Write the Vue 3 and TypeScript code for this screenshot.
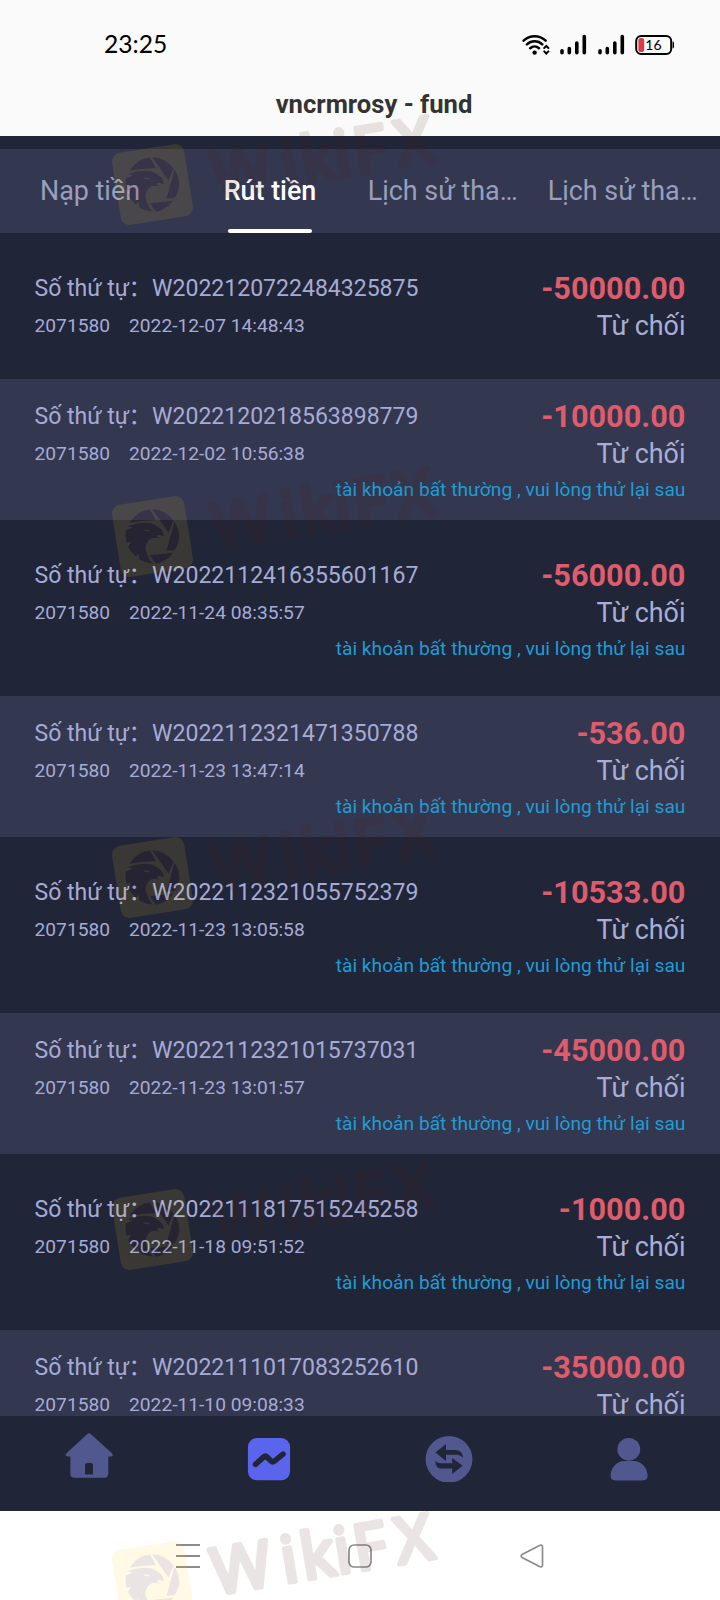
<script setup lang="ts">
interface Entry {
  order: string
  account: string
  time: string
  amount: string
  status: string
  note?: string
}

const note = 'tài khoản bất thường , vui lòng thử lại sau'
const status = 'Từ chối'
const account = '2071580'

const entries: Entry[] = [
  { order: 'W2022120722484325875', account, time: '2022-12-07 14:48:43', amount: '-50000.00', status },
  { order: 'W2022120218563898779', account, time: '2022-12-02 10:56:38', amount: '-10000.00', status, note },
  { order: 'W2022112416355601167', account, time: '2022-11-24 08:35:57', amount: '-56000.00', status, note },
  { order: 'W2022112321471350788', account, time: '2022-11-23 13:47:14', amount: '-536.00', status, note },
  { order: 'W2022112321055752379', account, time: '2022-11-23 13:05:58', amount: '-10533.00', status, note },
  { order: 'W2022112321015737031', account, time: '2022-11-23 13:01:57', amount: '-45000.00', status, note },
  { order: 'W2022111817515245258', account, time: '2022-11-18 09:51:52', amount: '-1000.00', status, note },
  { order: 'W2022111017083252610', account, time: '2022-11-10 09:08:33', amount: '-35000.00', status, note },
]

const tabs = [
  { label: 'Nạp tiền', active: false, cut: false },
  { label: 'Rút tiền', active: true, cut: false },
  { label: 'Lịch sử tha…', active: false, cut: true },
  { label: 'Lịch sử tha…', active: false, cut: true },
]

const markCenters = [184.5, 536.5, 877.5, 1229.5, 1581.5]
</script>

<template>
  <div class="screen">
    <div class="statusbar">
      <span class="clock">23:25</span>
      <div class="indicators">
        <svg class="wifi" width="28" height="22" viewBox="0 0 28 22" fill="none" stroke="#000" stroke-width="2.500" stroke-linecap="round">
          <path d="M1.600 6.600a16 16 0 0 1 22 0M4.900 10.400a11.300 11.300 0 0 1 15.400 0M8.200 14.200a6.600 6.600 0 0 1 8.800 0" />
          <circle cx="12.600" cy="18.600" r="2.200" fill="#000" stroke="none" />
          <path d="M21.800 14.200l2.500-2.500 2.500 2.500M21.800 17.200l2.500 2.500 2.500-2.500" stroke="#fafafa" stroke-width="5" />
          <path d="M22.200 14l2.100-2.100 2.100 2.100M22.200 17.400l2.100 2.100 2.100-2.100" stroke-width="2" />
        </svg>
        <svg v-for="n in 2" :key="n" class="signal" width="27" height="22" viewBox="0 0 27 22" stroke="#000" stroke-width="3.600" stroke-linecap="round">
          <path d="M2 16.800v2M9.300 14.500v4.300M16.800 9v9.800M24.300 2.600v16.200" />
        </svg>
        <svg class="battery" width="40" height="22" viewBox="0 0 40 22">
          <rect x="1.200" y="2" width="35" height="18" rx="5" fill="none" stroke="#000" stroke-width="2" />
          <path d="M37.600 7.500q1.400 0 1.400 1.400v4.200q0 1.400-1.400 1.400z" fill="#000" />
          <rect x="3.400" y="4" width="5.800" height="14" rx="2.600" fill="#dc3a4a" />
          <text x="10.300" y="15.800" class="charge">16</text>
        </svg>
      </div>
    </div>
    <header class="title">vncrmrosy - fund</header>

    <main class="page">
      <nav class="tabs">
        <div v-for="(tab, i) in tabs" :key="i" class="tab" :class="{ active: tab.active, cut: tab.cut }">
          <span>{{ tab.label }}</span>
        </div>
      </nav>
      <div class="list">
        <article v-for="item in entries" :key="item.order" class="entry">
          <div class="entry-body">
            <div class="left">
              <div class="order">Số thứ tự<span class="colon">：</span><span>{{ item.order }}</span></div>
              <div class="meta"><span>{{ item.account }}</span><span>{{ item.time }}</span></div>
            </div>
            <div class="right">
              <div class="amount">{{ item.amount }}</div>
              <div class="status">{{ item.status }}</div>
            </div>
            <div v-if="item.note" class="note">{{ item.note }}</div>
          </div>
        </article>
      </div>
    </main>

    <nav class="appbar">
      <div class="cell home">
        <svg width="48" height="48" viewBox="0 0 48 48" fill="#50588f">
          <path fill-rule="evenodd" d="M22.300.9q1.700-1.500 3.400 0l21 19.200q1.500 1.400.9 2.600-.4.700-1.800.7h-2.500v17.300q0 4-4 4H9.400q-4 0-4-4V23.400H2.800q-1.400 0-1.900-.7-.6-1.200.9-2.600zM22 30q-2 0-2 2v9.500h8V32q0-2-2-2z" />
        </svg>
      </div>
      <div class="cell">
        <svg width="48" height="48" viewBox="0 0 48 48">
          <rect x="2.900" y="4" width="42.200" height="42.300" rx="9" fill="#5b64ec" />
          <path d="M10.500 30.300l8-7.200q1.800-1.600 3.500 0l4 3.900q1.700 1.500 3.500.1l8.500-7" fill="none" stroke="#212538" stroke-width="5.600" stroke-linecap="round" />
        </svg>
      </div>
      <div class="cell">
        <svg width="48" height="48" viewBox="0 0 48 48">
          <circle cx="24" cy="25.300" r="23.400" fill="#50588f" />
          <path fill="#212538" d="M10.400 18.500L21 10v6h8.500c5.500 0 8.500 3 8.500 7.700-2.500-2.700-5-3-8.500-3H21v6.200zM37.600 31.800L27.200 24v5.300H16c-3.200 0-4.800-1-5.200-3-.9 5 1.300 8.300 6.200 8.300h10.200V40z" />
        </svg>
      </div>
      <div class="cell">
        <svg width="48" height="48" viewBox="0 0 48 48" fill="#50588f">
          <circle cx="23.800" cy="15.300" r="11.400" />
          <path d="M5.600 41.500C6.100 32.500 12.600 27 19.100 27h9.500c7 0 13.500 5.500 14 14.500.2 3.300-2 4.900-5 4.900h-27c-3 0-5.200-1.600-5-4.900z" />
        </svg>
      </div>
    </nav>

    <div class="sysbar">
      <svg width="26" height="26" viewBox="0 0 26 26" stroke="#8c8a8a" stroke-width="1.900"><path d="M1 2h24M1 13h24M1 24h24" /></svg>
      <svg width="26" height="26" viewBox="0 0 26 26" fill="none" stroke="#8c8a8a" stroke-width="1.700"><rect x="2" y="2" width="22" height="22" rx="5" /></svg>
      <svg width="26" height="26" viewBox="0 0 26 26" fill="none" stroke="#8c8a8a" stroke-width="1.700"><path d="M3.500 11.200L20.500 2.500q3-1.300 3 1.400v18.200q0 2.700-3 1.400L3.500 14.800q-2.700-1.800 0-3.600z" /></svg>
    </div>

    <svg class="watermark" width="720" height="1600" viewBox="0 0 720 1600" aria-hidden="true">
      <g v-for="cy in markCenters" :key="cy" class="mark" :transform="`translate(152.500 ${cy})`">
        <rect x="-36.500" y="-36.500" width="73" height="73" rx="9" fill="#ffcd1e" transform="rotate(-9)" />
        <g transform="scale(.3333) translate(-142 -139)" fill="#501912">
          <path d="M73 98Q95 62 134 58L153 90Q110 89 73 98z" />
          <path d="M141 57Q178 57 205 91L190 127Z" />
          <path d="M208 95Q224 120 222 144Q217 172 207 180L184 181z" />
          <path d="M134 195L204 188Q182 217 152 221z" />
          <path d="M68 108Q104 94 137 99Q151 104 160 111Q174 118 176 139Q164 131 153 137L164 145Q138 137 126 156Q116 174 126 193Q131 210 143 220Q119 219 103 208L100 190L93 200Q77 187 69 171L78 154L64 158Q59 137 62 121L83 112z" />
          <path d="M113 118Q123 126 136 121L127 119z" fill="#ffcd1e" />
        </g>
        <text class="brand" x="1 71 91 125 144.500 187" transform="translate(62 13.500) rotate(-9.500)">WikiFX</text>
      </g>
    </svg>
  </div>
</template>

<style>
body {
  margin: 0;
}
</style>

<style scoped>
.screen {
  position: relative;
  width: 720px;
  height: 1600px;
  overflow: hidden;
  display: flex;
  flex-direction: column;
  background: #fafafa;
  font-family: Roboto, "Noto Sans CJK SC", sans-serif;
}
.statusbar {
  height: 76px;
  box-sizing: border-box;
  padding: 14px 45.500px 0 104px;
  display: flex;
  align-items: center;
  justify-content: space-between;
  flex: none;
}
.clock {
  font-family: Lato, sans-serif;
  font-size: 24.600px;
  line-height: 30px;
  margin-top: -2px;
  color: #000;
}
.indicators {
  display: flex;
  align-items: center;
}
.signal {
  margin-left: 11px;
}
.wifi + .signal {
  margin-left: 9.500px;
}
.battery {
  margin-left: 10px;
}
.charge {
  font-family: Lato, sans-serif;
  font-size: 14px;
}
.title {
  height: 60px;
  box-sizing: border-box;
  flex: none;
  padding: 12px 0 0 28px;
  text-align: center;
  font-size: 25.600px;
  line-height: 32px;
  font-weight: 700;
  color: #333;
}
.page {
  height: 1280px;
  flex: none;
  overflow: hidden;
  background: #212538;
  padding-top: 13px;
  box-sizing: border-box;
}
.tabs {
  display: grid;
  grid-template-columns: repeat(4, 180px);
  height: 84px;
  background: #343750;
}
.tab {
  display: flex;
  flex-direction: column;
  align-items: center;
  padding: 0 7.700px;
  font-size: 26.900px;
  line-height: 84px;
  color: #9a9fbd;
  white-space: nowrap;
}
.tab.cut {
  align-items: flex-start;
}
.tab.active {
  color: #fff;
  font-weight: 500;
}
.tab.active::after {
  content: "";
  width: 84px;
  height: 4px;
  margin-top: -4px;
  border-radius: 2px;
  background: #fff;
}
.entry {
  padding: 17.500px 0;
}
.entry:nth-child(even) {
  padding: 0;
  background: #343750;
}
.entry-body {
  display: grid;
  grid-template-columns: 1fr auto;
  padding: 19px 34.560px 15px;
}
.order {
  font-size: 23.040px;
  line-height: 38px;
  color: #a6abd6;
  white-space: nowrap;
}
.colon {
  margin: 0 .500px 0 -.500px;
}
.meta {
  display: flex;
  gap: 19px;
  font-size: 19.200px;
  line-height: 36px;
  color: #a6abd6;
}
.right {
  text-align: right;
}
.amount {
  font-size: 30.700px;
  line-height: 38px;
  font-weight: 700;
  color: #df5c6c;
}
.status {
  font-size: 26.900px;
  line-height: 37px;
  color: #a9aed6;
}
.note {
  grid-column: 1 / -1;
  text-align: right;
  font-size: 19.200px;
  line-height: 30px;
  padding-top: 2px;
  color: #1f9cd3;
}
.entry:first-child .entry-body {
  padding-bottom: 17px;
}
.appbar {
  height: 95px;
  flex: none;
  display: grid;
  grid-template-columns: repeat(4, 180px);
  background: #212538;
}
.cell {
  display: flex;
  justify-content: center;
  padding: 18px 1.500px 0 0;
}
.cell.home {
  padding-top: 17px;
}
.cell svg {
  display: block;
}
.sysbar {
  flex: 1;
  background: #fff;
  display: flex;
  justify-content: space-between;
  align-items: center;
  padding: 0 175px;
}
.watermark {
  position: absolute;
  inset: 0;
  pointer-events: none;
}
.mark {
  opacity: .11;
}
.brand {
  font-family: "Noto Sans", sans-serif;
  font-size: 64px;
  font-weight: 400;
  fill: #501912;
  stroke: #501912;
  stroke-width: 4.600px;
  stroke-linejoin: round;
}
</style>
